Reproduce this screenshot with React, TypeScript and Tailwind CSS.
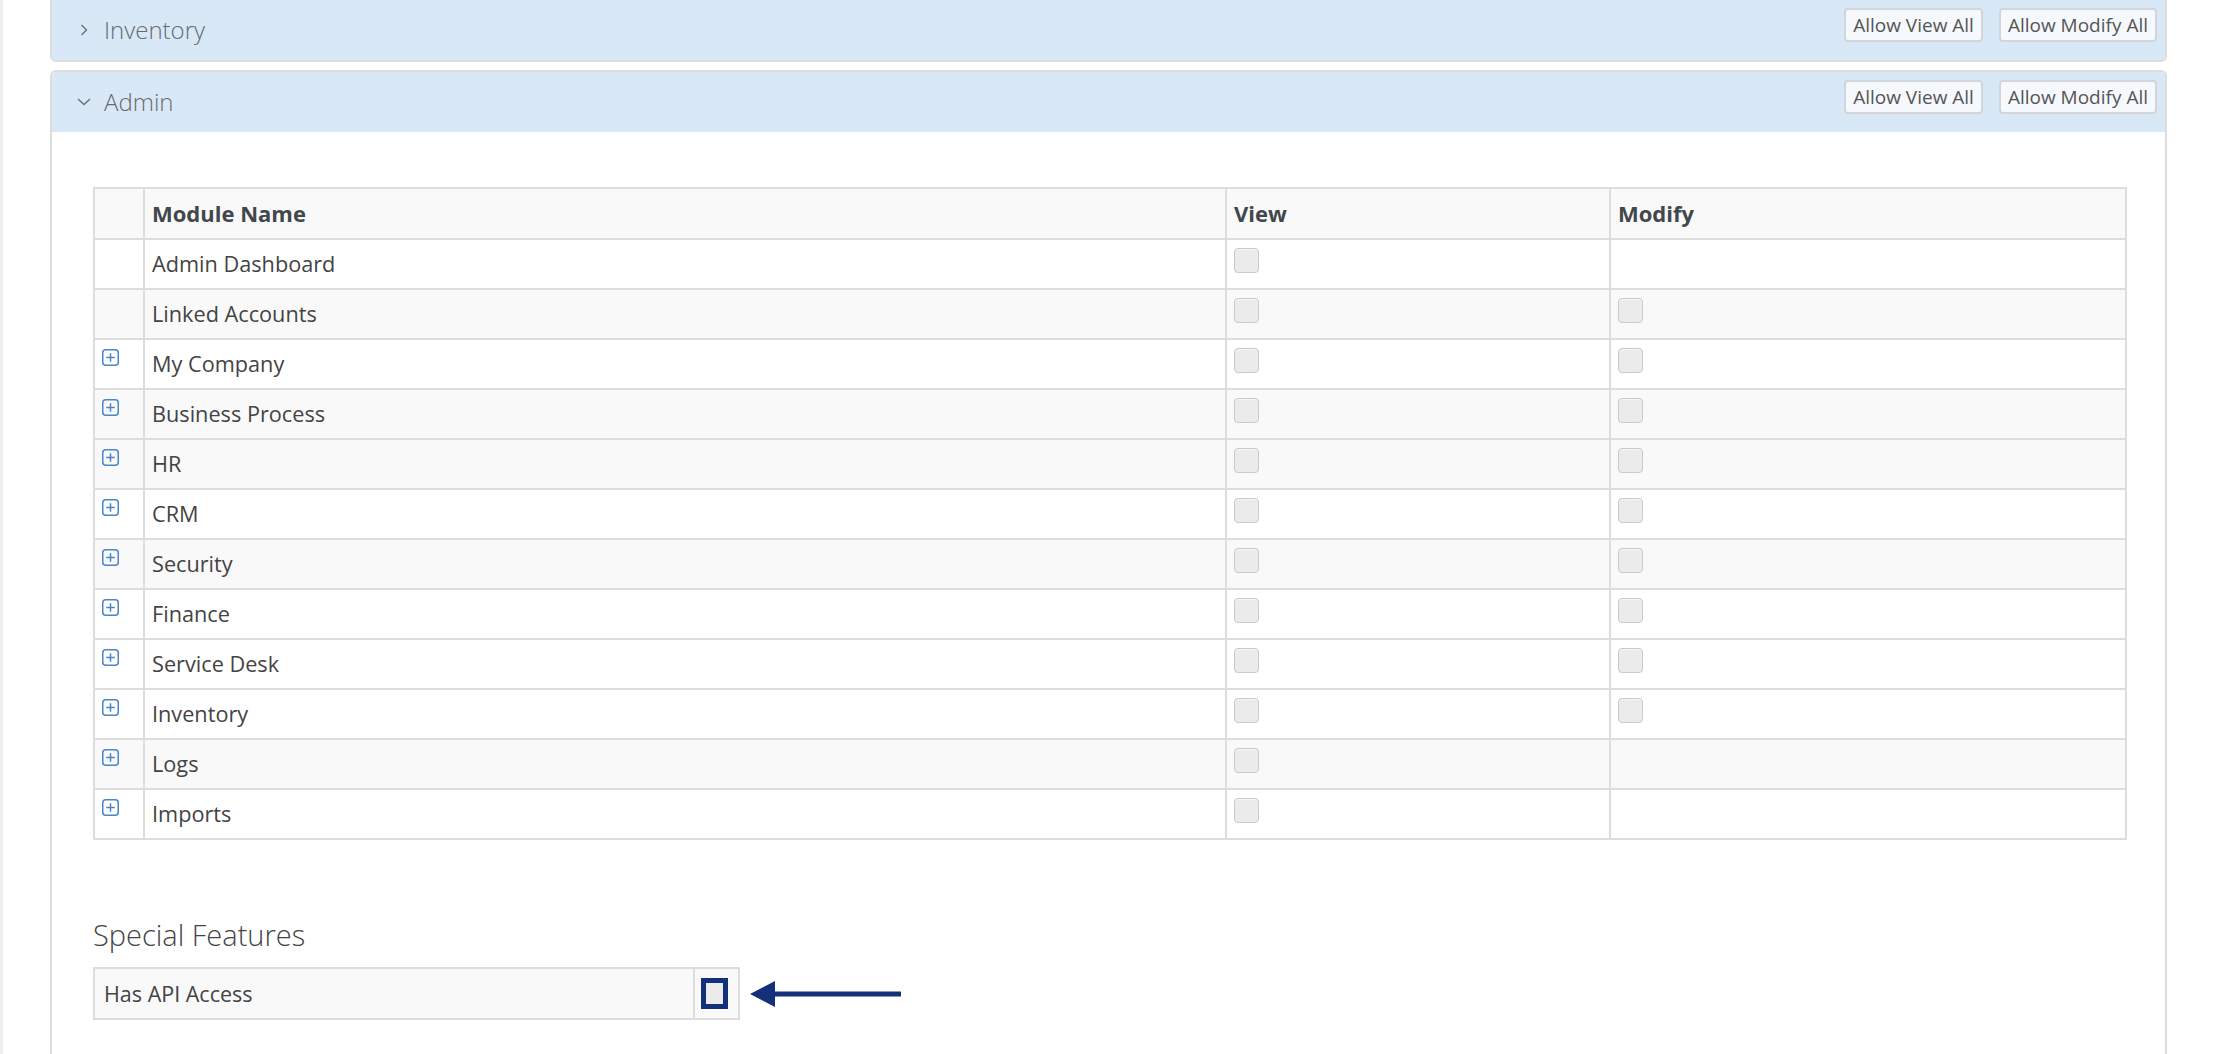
import React from "react";

type Row = {
  name: string;
  expandable: boolean;
  view: boolean;
  modify: boolean;
  shaded: boolean;
};

const rows: Row[] = [
  { name: "Admin Dashboard", expandable: false, view: true, modify: false, shaded: false },
  { name: "Linked Accounts", expandable: false, view: true, modify: true, shaded: true },
  { name: "My Company", expandable: true, view: true, modify: true, shaded: false },
  { name: "Business Process", expandable: true, view: true, modify: true, shaded: true },
  { name: "HR", expandable: true, view: true, modify: true, shaded: true },
  { name: "CRM", expandable: true, view: true, modify: true, shaded: false },
  { name: "Security", expandable: true, view: true, modify: true, shaded: true },
  { name: "Finance", expandable: true, view: true, modify: true, shaded: false },
  { name: "Service Desk", expandable: true, view: true, modify: true, shaded: false },
  { name: "Inventory", expandable: true, view: true, modify: true, shaded: false },
  { name: "Logs", expandable: true, view: true, modify: false, shaded: true },
  { name: "Imports", expandable: true, view: true, modify: false, shaded: false },
];

function PlusBox() {
  return (
    <svg width="17" height="17" viewBox="0 0 17 17" fill="none">
      <rect x="0.75" y="0.75" width="15.5" height="15.5" rx="3" stroke="#4a86c8" strokeWidth="1.5" />
      <path d="M8.5 4.2v8.6M4.2 8.5h8.6" stroke="#4a86c8" strokeWidth="1.5" />
    </svg>
  );
}

function Checkbox() {
  return (
    <div className="h-[25px] w-[25px] rounded-[4px] border border-[#cacaca] bg-[#ebebeb] shadow-[inset_0_1px_0_#f6f6f6]" />
  );
}

function ChevronRight() {
  return (
    <svg width="8" height="12" viewBox="0 0 8 12" fill="none" className="ml-[4px]">
      <path d="M1.5 1L6.5 6L1.5 11" stroke="#6b6f73" strokeWidth="1.4" />
    </svg>
  );
}

function ChevronDown() {
  return (
    <svg width="14" height="8" viewBox="0 0 14 8" fill="none" className="ml-[1px]">
      <path d="M1 1L7 6.5L13 1" stroke="#6b6f73" strokeWidth="1.4" />
    </svg>
  );
}

function HeaderButtons() {
  return (
    <div className="ml-auto mt-[8px] flex gap-[16px] self-start">
      <button className="h-[34px] rounded-[4px] border-2 border-[#d3d6d9] bg-[#f5f8fc] px-[7px] text-[19px] leading-none text-[#555]">
        Allow View All
      </button>
      <button className="h-[34px] rounded-[4px] border-2 border-[#d3d6d9] bg-[#f5f8fc] px-[7px] text-[19px] leading-none text-[#555]">
        Allow Modify All
      </button>
    </div>
  );
}

function PanelHeader({ title, open }: { title: string; open: boolean }) {
  return (
    <div className="flex h-[60px] items-center bg-[#d9e8f7] pl-[24px] pr-[8px]">
      <div className="flex w-[28px] items-center">{open ? <ChevronDown /> : <ChevronRight />}</div>
      <span className="text-[24px] font-light text-[#666b70]">{title}</span>
      <HeaderButtons />
    </div>
  );
}

export default function App() {
  return (
    <div
      className="h-screen overflow-hidden border-l-[3px] border-[#eeeeee] bg-white pl-[47px] pr-[47px]"
      style={{ fontFamily: '"Open Sans", "Liberation Sans", sans-serif' }}
    >
      {/* Collapsed panel */}
      <div className="-mt-[2px] overflow-hidden rounded-b-[6px] border-2 border-[#dddddd]">
        <PanelHeader title="Inventory" open={false} />
      </div>

      {/* Open panel */}
      <div className="mt-[8px] overflow-hidden rounded-t-[6px] border-2 border-b-0 border-[#dddddd]">
        <PanelHeader title="Admin" open={true} />
        <div className="bg-white px-[41px] pb-[40px] pt-[55px]">
          <table className="w-[2032px] table-fixed border-collapse text-[21.7px] text-[#444]">
            <colgroup>
              <col className="w-[50px]" />
              <col className="w-[1082px]" />
              <col className="w-[384px]" />
              <col className="w-[516px]" />
            </colgroup>
            <thead>
              <tr className="bg-[#f9f9f9]">
                <th className="h-[51px] border-2 border-[#dddddd]" />
                <th className="h-[51px] border-2 border-[#dddddd] px-[7px] text-left text-[22px] font-bold text-[#42474c]">
                  Module Name
                </th>
                <th className="h-[51px] border-2 border-[#dddddd] px-[7px] text-left text-[22px] font-bold text-[#42474c]">
                  View
                </th>
                <th className="h-[51px] border-2 border-[#dddddd] px-[7px] text-left text-[22px] font-bold text-[#42474c]">
                  Modify
                </th>
              </tr>
            </thead>
            <tbody>
              {rows.map((r) => (
                <tr key={r.name} className={r.shaded ? "bg-[#f9f9f9]" : "bg-white"}>
                  <td className="h-[50px] border-2 border-[#dddddd] px-[7px] pt-[9px] align-top">
                    {r.expandable && <PlusBox />}
                  </td>
                  <td className="h-[50px] border-2 border-[#dddddd] px-[7px] pt-[9px] align-top leading-[30px]">
                    {r.name}
                  </td>
                  <td className="h-[50px] border-2 border-[#dddddd] px-[7px] pt-[8px] align-top">
                    {r.view && <Checkbox />}
                  </td>
                  <td className="h-[50px] border-2 border-[#dddddd] px-[7px] pt-[8px] align-top">
                    {r.modify && <Checkbox />}
                  </td>
                </tr>
              ))}
            </tbody>
          </table>

          <h3 className="mb-[12px] mt-[75px] text-[29px] font-light leading-[40px] text-[#444]">
            Special Features
          </h3>

          <div className="flex items-center gap-[10px]">
            <table className="w-[645px] table-fixed border-collapse text-[21.5px] text-[#444]">
              <colgroup>
                <col className="w-[600px]" />
                <col className="w-[45px]" />
              </colgroup>
              <tbody>
                <tr className="bg-[#f9f9f9]">
                  <td className="h-[51px] border-2 border-[#dddddd] px-[9px] leading-[30px]">Has API Access</td>
                  <td className="h-[51px] border-2 border-[#dddddd] px-[6px]">
                    <div className="h-[31px] w-[27px] border-[5px] border-[#13317a] bg-[#ececec]" />
                  </td>
                </tr>
              </tbody>
            </table>
            <svg width="154" height="28" viewBox="0 0 154 28" fill="none">
              <path d="M0 14L25 1V27Z" fill="#13317a" />
              <path d="M20 14H151" stroke="#13317a" strokeWidth="5" />
            </svg>
          </div>
        </div>
      </div>
    </div>
  );
}
